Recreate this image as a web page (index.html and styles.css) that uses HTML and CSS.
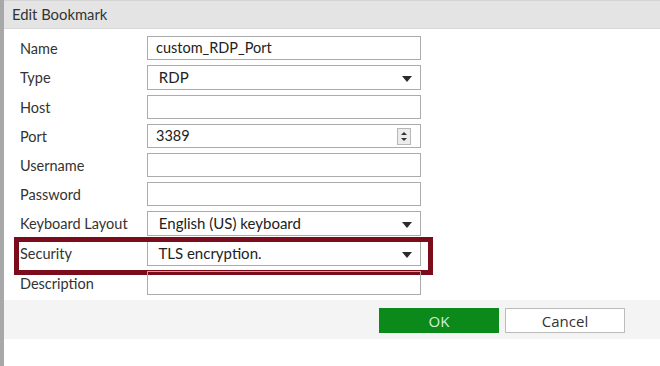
FILE: index.html
```html
<!DOCTYPE html>
<html lang="en">
<head>
  <meta charset="UTF-8" />
  <title>Edit Bookmark</title>
  <link rel="stylesheet" href="styles.css">
</head>
<body>

  <div class="dialog">
    <div class="dialog-title">Edit Bookmark</div>

    <!-- Bookmark fields -->
    <div class="form">
      <div class="row">
        <label>Name</label>
        <div class="field">custom_RDP_Port</div>
      </div>
      <div class="row">
        <label>Type</label>
        <div class="field select">&nbsp;RDP<span class="caret"></span></div>
      </div>
      <div class="row">
        <label>Host</label>
        <div class="field"></div>
      </div>
      <div class="row">
        <label>Port</label>
        <div class="field">3389
          <span class="spinner">
            <span class="spin-up"></span>
            <span class="spin-down"></span>
          </span>
        </div>
      </div>
      <div class="row">
        <label>Username</label>
        <div class="field"></div>
      </div>
      <div class="row">
        <label>Password</label>
        <div class="field"></div>
      </div>
      <div class="row">
        <label>Keyboard Layout</label>
        <div class="field select">&nbsp;English (US) keyboard<span class="caret"></span></div>
      </div>
      <div class="row highlight">
        <label>Security</label>
        <div class="field select">&nbsp;TLS encryption.<span class="caret"></span></div>
      </div>
      <div class="row">
        <label>Description</label>
        <div class="field"></div>
      </div>
    </div>

    <div class="dialog-footer">
      <button class="btn btn-ok">OK</button>
      <button class="btn btn-cancel">Cancel</button>
    </div>
  </div>

</body>
</html>
```

FILE: styles.css
```css
*, *::before, *::after {
  box-sizing: border-box;
}

body, html {
  margin: 0;
  padding: 0;
  width: 100%;
  height: 100%;
  font-family: Lato, 'Liberation Sans', sans-serif;
  color: #333;
  overflow: hidden;
  background: #fff;
}

.dialog {
  height: 100%;
  border-left: 4px solid #a8a8a8;
}

.dialog-title {
  height: 29px;
  padding: 4px 0 0 8px;
  font-size: 14.8px;
  background: #e4e4e4;
  border-top: 1px solid #d4d4d4;
  border-bottom: 1px solid #d8d8d8;
}

.form {
  display: flex;
  flex-direction: column;
  align-items: flex-start;
  gap: 5px;
  padding: 7px 0 5px 16px;
}

.row {
  display: flex;
  align-items: center;
}

.row label {
  width: 127px;
  font-size: 14.5px;
}

.field {
  position: relative;
  width: 274px;
  height: 24px;
  padding: 2px 0 0 8px;
  border: 1px solid #ababab;
  font-size: 14.5px;
  color: #222;
}

.field.select {
  height: 25px;
  padding-left: 7px;
  font-size: 15px;
}

.caret {
  position: absolute;
  right: 8px;
  top: 10px;
  border-left: 5px solid transparent;
  border-right: 5px solid transparent;
  border-top: 6px solid #2b2b2b;
}

.spinner {
  position: absolute;
  right: 9px;
  top: 3px;
  width: 14px;
  height: 17px;
  border: 1px solid #b8b8b8;
  background: #ececec;
  display: flex;
  flex-direction: column;
  align-items: center;
  justify-content: center;
  gap: 3px;
}

.spin-up {
  border-left: 3px solid transparent;
  border-right: 3px solid transparent;
  border-bottom: 3px solid #333;
}

.spin-down {
  border-left: 3px solid transparent;
  border-right: 3px solid transparent;
  border-top: 3px solid #333;
}

.highlight {
  position: relative;
}

.highlight::after {
  content: "";
  position: absolute;
  top: -4px;
  bottom: -9px;
  left: -6px;
  right: -12px;
  border: 5px solid #7a0c1c;
}

.dialog-footer {
  display: flex;
  justify-content: flex-end;
  gap: 6px;
  height: 39px;
  padding: 8px 35px 0 0;
  background: #f4f4f4;
}

.btn {
  width: 120px;
  height: 25px;
  font-family: 'Open Sans', 'Liberation Sans', sans-serif;
  font-size: 15px;
  cursor: pointer;
}

.btn-ok {
  background: #0b891b;
  color: #d8f0d4;
  border: 1px solid #0b891b;
}

.btn-cancel {
  background: #fff;
  color: #333;
  border: 1px solid #bcbcbc;
}
```
